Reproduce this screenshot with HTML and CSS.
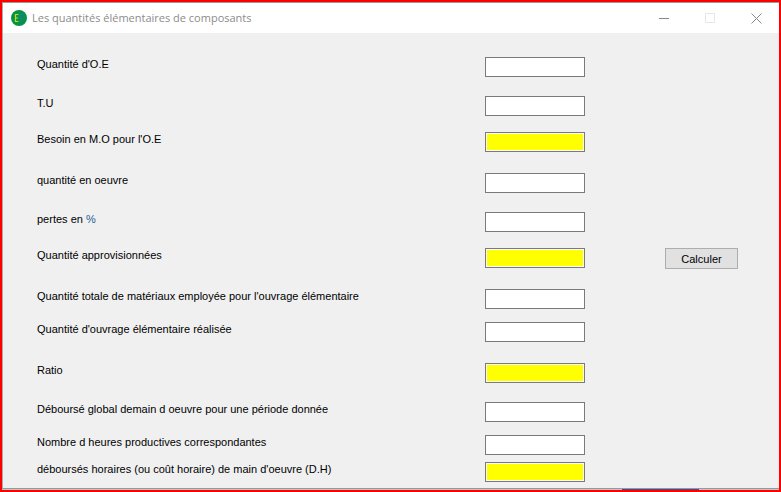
FILE: index.html
```html
<!DOCTYPE html>
<html lang="fr">
<head>
<meta charset="utf-8">
<title>Les quantités élémentaires de composants</title>
<link rel="stylesheet" href="styles.css">
</head>
<body>
<main class="window">
  <header class="titlebar">
    <svg class="logo" viewBox="0 0 16 16" aria-hidden="true">
      <circle cx="8" cy="8" r="8" fill="#079247"/>
      <path d="M7.5 4.5h-3v7h3M4.5 8h2.6" fill="none" stroke="#b4e01e" stroke-width="1.2"/>
      <path d="M9.5 12V4.5h1.8q1.9 0 1.9 2t-1.9 2H9.5" fill="none" stroke="#14868a" stroke-width="1.2"/>
    </svg>
    <h1 class="title">Les quantités élémentaires de composants</h1>
    <button class="control" type="button" aria-label="Réduire"><svg viewBox="0 0 11 11"><path d="M0 5.5h10"/></svg></button>
    <button class="control" type="button" aria-label="Agrandir" disabled><svg viewBox="0 0 11 11"><path d="M.5 .5h9v9h-9z"/></svg></button>
    <button class="control" type="button" aria-label="Fermer"><svg viewBox="0 0 11 11"><path d="M.5 .5l10 10M10.5 .5l-10 10"/></svg></button>
  </header>
  <form class="form">
    <div class="row"><label for="qoe">Quantité d'O.E</label><input id="qoe" type="text"></div>
    <div class="row gap-l"><label for="tu">T.U</label><input id="tu" type="text"></div>
    <div class="row gap-m"><label for="besoin">Besoin en M.O pour l'O.E</label><input id="besoin" class="result" type="text" readonly></div>
    <div class="row gap-xl"><label for="qo">quantité en oeuvre</label><input id="qo" type="text"></div>
    <div class="row gap-l"><label for="pertes">pertes en <span class="percent">%</span></label><input id="pertes" type="text"></div>
    <div class="row gap-m"><label for="appro">Quantité approvisionnées</label><input id="appro" class="result" type="text" readonly><button class="action" type="button">Calculer</button></div>
    <div class="row gap-xl"><label for="totale">Quantité totale de matériaux employée pour l'ouvrage élémentaire</label><input id="totale" type="text"></div>
    <div class="row gap-s"><label for="realisee">Quantité d'ouvrage élémentaire réalisée</label><input id="realisee" type="text"></div>
    <div class="row gap-xl"><label for="ratio">Ratio</label><input id="ratio" class="result" type="text" readonly></div>
    <div class="row gap-l"><label for="global">Déboursé global demain d oeuvre pour une période donnée</label><input id="global" type="text"></div>
    <div class="row gap-s"><label for="heures">Nombre d heures productives correspondantes</label><input id="heures" type="text"></div>
    <div class="row gap-xs"><label for="dh">déboursés horaires (ou coût horaire) de main d'oeuvre (D.H)</label><input id="dh" class="result" type="text" readonly></div>
  </form>
  <div class="edge"><span class="edge-mark"></span></div>
</main>
</body>
</html>
```
FILE: styles.css
```css
* {
  box-sizing: border-box;
}

body {
  margin: 0;
  font: 11px/14px "Liberation Sans", Arial, sans-serif;
  color: #000;
  background: #f0f0f0;
}

.window {
  display: flex;
  flex-direction: column;
  min-height: 100vh;
  border: 2px solid #f00;
}

.titlebar {
  display: flex;
  align-items: center;
  height: 31px;
  padding-left: 8px;
  border-top: 1px solid #999;
  border-left: 1px solid #aaa;
  background: #fff;
}

.logo {
  width: 16px;
  height: 16px;
}

.title {
  flex: 1;
  margin: 0 0 0 5px;
  font: 11px/16px "Open Sans", "Segoe UI", sans-serif;
  color: #8c8c8c;
}

.control {
  display: grid;
  place-items: center;
  width: 46px;
  height: 30px;
  padding: 0;
  border: 0;
  background: none;
}

.control svg {
  width: 11px;
  height: 11px;
  fill: none;
  stroke: #888;
}

.control:disabled svg {
  stroke: #e6e6e6;
}

.form {
  flex: 1;
  padding: 24px 41px 6px 34px;
  border-left: 1px solid #aaa;
}

.row {
  display: grid;
  grid-template-columns: 1fr 100px 73px;
  column-gap: 80px;
  height: 20px;
}

.row label {
  white-space: nowrap;
}

.percent {
  color: #1f5f92;
}

.row input {
  width: 100%;
  height: 20px;
  padding: 1px;
  border: 1px solid #7a7a7a;
  border-radius: 0;
  background: #fff;
  font: inherit;
}

.row .result {
  background: #ff0;
  box-shadow: inset 0 0 0 1px #fff;
}

.action {
  height: 21px;
  padding: 0;
  border: 1px solid #adadad;
  background: #e1e1e1;
  color: #000;
  font: inherit;
}

.gap-xs {
  margin-top: 7px;
}

.gap-s {
  margin-top: 13px;
}

.gap-m {
  margin-top: 16px;
}

.gap-l {
  margin-top: 19px;
}

.gap-xl {
  margin-top: 21px;
}

.edge {
  display: flex;
  justify-content: flex-end;
  height: 2px;
  padding-right: 80px;
  border-top: 1px solid #999;
  background: #c4c4c4;
}

.edge-mark {
  width: 11%;
  background: #444a98;
}
```
